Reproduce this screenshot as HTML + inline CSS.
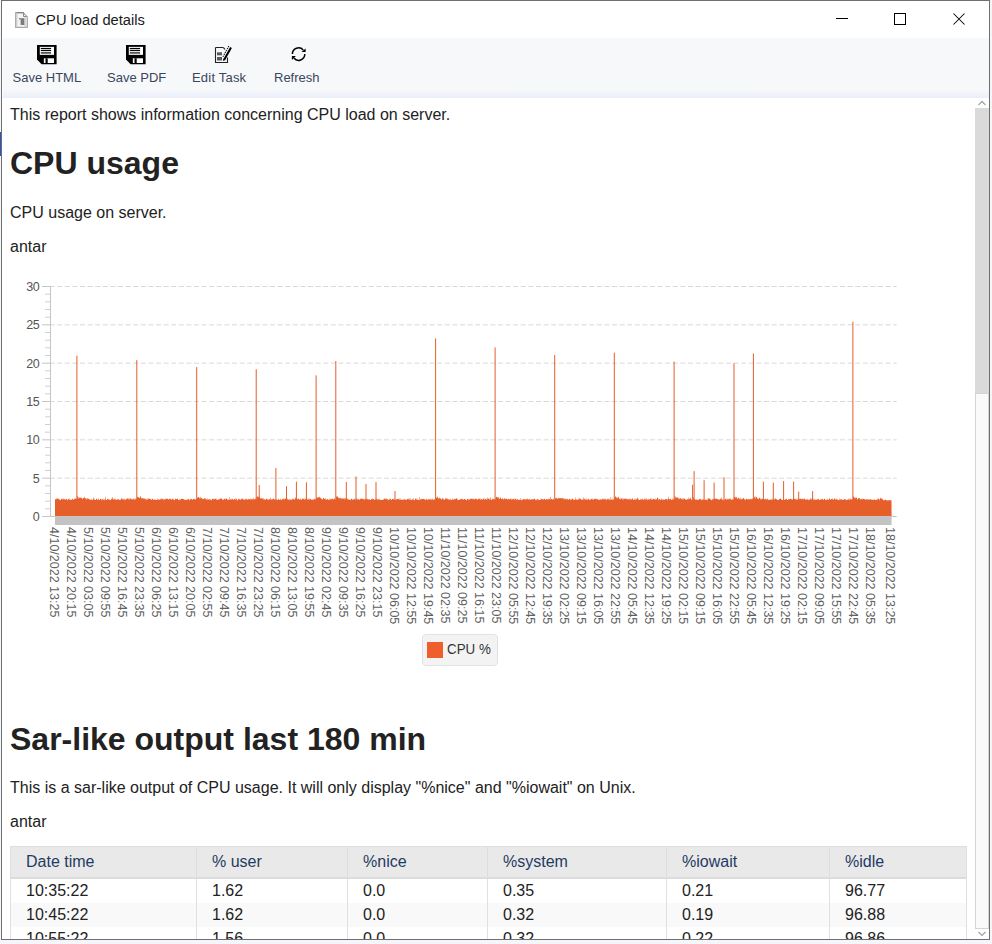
<!DOCTYPE html>
<html><head><meta charset="utf-8">
<style>
html,body{margin:0;padding:0;}
body{width:992px;height:944px;overflow:hidden;position:relative;background:#f4f6fa;font-family:"Liberation Sans",sans-serif;}
.win{position:absolute;left:1px;top:0;width:989px;height:940px;box-sizing:border-box;border:1px solid #6f6f6f;background:#fff;overflow:hidden;}
.abs{position:absolute;white-space:nowrap;}
.title{left:33.5px;top:10px;font-size:14.7px;line-height:18px;color:#1a1a1a;}
.tb{position:absolute;left:1px;top:37px;width:986px;height:60px;background:linear-gradient(to bottom,#f7f8fa 0px,#f7f8fa 52px,#e9eefa 60px);}
.tbl{position:absolute;top:32px;font-size:13px;line-height:16px;color:#3a4660;white-space:nowrap;}
.content{position:absolute;left:0px;top:97px;width:973px;height:841px;overflow:hidden;background:#fff;}
.sb{position:absolute;left:973px;top:97px;width:14px;height:841px;background:#fff;}
.p{position:absolute;left:8px;font-size:16px;line-height:18px;color:#222;white-space:nowrap;}
.h1{position:absolute;left:8px;font-size:32px;line-height:37px;font-weight:bold;color:#222;white-space:nowrap;}
.xl{position:absolute;top:527px;transform-origin:0 0;transform:rotate(90deg);font-size:12.5px;line-height:14px;color:#606060;white-space:nowrap;}
.legend{position:absolute;left:420px;top:536px;width:76px;height:32px;box-sizing:border-box;border:1px solid #e2e2e2;border-radius:4px;background:#f3f3f3;}
.sw{position:absolute;left:4px;top:7px;width:16px;height:16px;background:#ef5f2d;}
.lt{position:absolute;left:24px;top:5px;font-size:15px;line-height:17px;color:#333;white-space:nowrap;transform-origin:0 0;transform:scaleX(0.89);}
table{position:absolute;left:8px;top:748px;width:957px;border-collapse:collapse;font-size:16px;}
th{background:#e9e9e9;color:#1f3b63;font-weight:normal;text-align:left;height:30px;padding:0 0 0 15px;border:1px solid #dedede;border-bottom:2px solid #dcdcdc;}
td{height:24px;padding:0 0 0 15px;color:#222;border-left:1px solid #e0e0e0;border-right:1px solid #e0e0e0;}
tr.alt td{background:#f9f9f9;}
</style></head><body>
<div style="position:absolute;left:0;top:132px;width:1px;height:24px;background:#3050c8"></div>
<div class="win">
  <!-- title bar -->
  <svg class="abs" style="left:12px;top:10px" width="16" height="18" viewBox="0 0 16 18">
    <path d="M1.6,1.6 H9 L13.4,5.8 V16.4 H1.6 Z" fill="#f4f4f4" stroke="#a9a9a9" stroke-width="1.1" stroke-linejoin="round"/>
    <path d="M2.5,1.6 H9 L10.2,3" fill="none" stroke="#858585" stroke-width="1.2"/>
    <path d="M9.5,2.2 L9.5,5.5 L13,5.5" fill="none" stroke="#8a8a8a" stroke-width="1"/>
    <rect x="10" y="6.6" width="2.8" height="9.2" fill="#d6d6d6"/>
    <rect x="6.6" y="7.2" width="3.6" height="6.8" fill="#7b7b7b"/>
    <rect x="5.2" y="7.2" width="1.4" height="1.2" fill="#555"/>
    <rect x="2.2" y="2.4" width="1.2" height="13.4" fill="#c9c9c9"/>
  </svg>
  <div class="abs title">CPU load details</div>
  <svg class="abs" style="left:819px;top:7px" width="160" height="20" viewBox="0 0 160 20">
    <rect x="15" y="10" width="12" height="1" fill="#000"/>
    <rect x="73.5" y="5.5" width="11" height="11" fill="none" stroke="#000" stroke-width="1"/>
    <path d="M132.5,5.5 L143.5,16.5 M143.5,5.5 L132.5,16.5" stroke="#000" stroke-width="1.05"/>
  </svg>
  <!-- toolbar -->
  <div class="tb">
    <svg class="abs" style="left:34px;top:7px" width="22" height="22" viewBox="0 0 22 22">
      <path d="M0,0 H19.6 V19.2 H4.6 L0,14.5 Z" fill="#000"/>
      <rect x="2.8" y="1.85" width="14.2" height="8" fill="#fff"/>
      <rect x="3.8" y="2.9" width="10.3" height="1.2" fill="#000"/>
      <rect x="3.8" y="4.9" width="10.3" height="1.2" fill="#000"/>
      <rect x="3.8" y="7.1" width="10.3" height="1.6" fill="#444"/>
      <rect x="6.85" y="13.3" width="10.15" height="4.7" fill="#fff"/>
      <rect x="8.5" y="13.3" width="2.2" height="5" fill="#000"/>
    </svg>
    <svg class="abs" style="left:123px;top:7px" width="22" height="22" viewBox="0 0 22 22">
      <path d="M0,0 H19.6 V19.2 H4.6 L0,14.5 Z" fill="#000"/>
      <rect x="2.8" y="1.85" width="14.2" height="8" fill="#fff"/>
      <rect x="3.8" y="2.9" width="10.3" height="1.2" fill="#000"/>
      <rect x="3.8" y="4.9" width="10.3" height="1.2" fill="#000"/>
      <rect x="3.8" y="7.1" width="10.3" height="1.6" fill="#444"/>
      <rect x="6.85" y="13.3" width="10.15" height="4.7" fill="#fff"/>
      <rect x="8.5" y="13.3" width="2.2" height="5" fill="#000"/>
    </svg>
    <svg class="abs" style="left:209px;top:6px" width="24" height="22" viewBox="0 0 24 22">
      <path d="M3.5,3.5 H10.5 Q12,3.5 13,5.5 M15.5,13.5 V18.5 H3.5 V3.5" fill="none" stroke="#222" stroke-width="1.1"/>
      <rect x="5" y="8.3" width="5" height="3" fill="#5a5a5a"/>
      <rect x="5" y="13" width="5" height="3.5" fill="#5a5a5a"/>
      <path d="M13.1,16.3 L19.9,4.1 L18.1,3.0 L11.3,15.2 Z" fill="#000"/>
      <path d="M10.9,12.8 L16.9,2.0" fill="none" stroke="#111" stroke-width="1.1" stroke-dasharray="1.3,0.9"/>
      <path d="M11.0,17.0 L11.3,14.6 L13.3,15.9 Z" fill="#000"/>
    </svg>
    <svg class="abs" style="left:286px;top:7px" width="20" height="20" viewBox="0 0 20 20">
      <path d="M3.4,9.1 A6.2,6.2 0 0 1 14.2,4.95" fill="none" stroke="#000" stroke-width="1.5"/>
      <path d="M16.6,3.6 L16.6,7 L12.5,7 Z" fill="#000"/>
      <path d="M15.8,9.1 A6.2,6.2 0 0 1 4.85,13.1" fill="none" stroke="#000" stroke-width="1.5"/>
      <path d="M2.9,11.0 L2.9,14.9 L6.9,11.0 Z" fill="#000"/>
    </svg>
    <div class="tbl" style="left:9.5px">Save HTML</div>
    <div class="tbl" style="left:104px">Save PDF</div>
    <div class="tbl" style="left:189px;letter-spacing:0.2px">Edit Task</div>
    <div class="tbl" style="left:271px">Refresh</div>
  </div>
  <!-- content -->
  <div class="content">
    <div class="p" style="top:8px">This report shows information concerning CPU load on server.</div>
    <div class="h1" style="top:46.5px">CPU usage</div>
    <div class="p" style="top:106px">CPU usage on server.</div>
    <div class="p" style="top:140px">antar</div>
    <div class="abs" style="left:-2px;top:-98px;width:992px;height:700px;">
<svg width="992" height="700" viewBox="0 0 992 700" style="position:absolute;left:0;top:0">
<line x1="49.6" y1="286.50" x2="896.7" y2="286.50" stroke="#d9d9d9" stroke-width="1" stroke-dasharray="5,2.6"/>
<line x1="49.6" y1="324.83" x2="896.7" y2="324.83" stroke="#d9d9d9" stroke-width="1" stroke-dasharray="5,2.6"/>
<line x1="49.6" y1="363.17" x2="896.7" y2="363.17" stroke="#d9d9d9" stroke-width="1" stroke-dasharray="5,2.6"/>
<line x1="49.6" y1="401.50" x2="896.7" y2="401.50" stroke="#d9d9d9" stroke-width="1" stroke-dasharray="5,2.6"/>
<line x1="49.6" y1="439.83" x2="896.7" y2="439.83" stroke="#d9d9d9" stroke-width="1" stroke-dasharray="5,2.6"/>
<line x1="49.6" y1="478.17" x2="896.7" y2="478.17" stroke="#d9d9d9" stroke-width="1" stroke-dasharray="5,2.6"/>
<line x1="50.5" y1="286" x2="50.5" y2="517" stroke="#c6c6c6" stroke-width="1"/>
<line x1="42" y1="516.50" x2="50" y2="516.50" stroke="#c6c6c6" stroke-width="1"/>
<line x1="45" y1="508.83" x2="50" y2="508.83" stroke="#cfcfcf" stroke-width="1"/>
<line x1="45" y1="501.17" x2="50" y2="501.17" stroke="#cfcfcf" stroke-width="1"/>
<line x1="45" y1="493.50" x2="50" y2="493.50" stroke="#cfcfcf" stroke-width="1"/>
<line x1="45" y1="485.83" x2="50" y2="485.83" stroke="#cfcfcf" stroke-width="1"/>
<line x1="42" y1="478.17" x2="50" y2="478.17" stroke="#c6c6c6" stroke-width="1"/>
<line x1="45" y1="470.50" x2="50" y2="470.50" stroke="#cfcfcf" stroke-width="1"/>
<line x1="45" y1="462.83" x2="50" y2="462.83" stroke="#cfcfcf" stroke-width="1"/>
<line x1="45" y1="455.17" x2="50" y2="455.17" stroke="#cfcfcf" stroke-width="1"/>
<line x1="45" y1="447.50" x2="50" y2="447.50" stroke="#cfcfcf" stroke-width="1"/>
<line x1="42" y1="439.83" x2="50" y2="439.83" stroke="#c6c6c6" stroke-width="1"/>
<line x1="45" y1="432.17" x2="50" y2="432.17" stroke="#cfcfcf" stroke-width="1"/>
<line x1="45" y1="424.50" x2="50" y2="424.50" stroke="#cfcfcf" stroke-width="1"/>
<line x1="45" y1="416.83" x2="50" y2="416.83" stroke="#cfcfcf" stroke-width="1"/>
<line x1="45" y1="409.17" x2="50" y2="409.17" stroke="#cfcfcf" stroke-width="1"/>
<line x1="42" y1="401.50" x2="50" y2="401.50" stroke="#c6c6c6" stroke-width="1"/>
<line x1="45" y1="393.83" x2="50" y2="393.83" stroke="#cfcfcf" stroke-width="1"/>
<line x1="45" y1="386.17" x2="50" y2="386.17" stroke="#cfcfcf" stroke-width="1"/>
<line x1="45" y1="378.50" x2="50" y2="378.50" stroke="#cfcfcf" stroke-width="1"/>
<line x1="45" y1="370.83" x2="50" y2="370.83" stroke="#cfcfcf" stroke-width="1"/>
<line x1="42" y1="363.17" x2="50" y2="363.17" stroke="#c6c6c6" stroke-width="1"/>
<line x1="45" y1="355.50" x2="50" y2="355.50" stroke="#cfcfcf" stroke-width="1"/>
<line x1="45" y1="347.83" x2="50" y2="347.83" stroke="#cfcfcf" stroke-width="1"/>
<line x1="45" y1="340.17" x2="50" y2="340.17" stroke="#cfcfcf" stroke-width="1"/>
<line x1="45" y1="332.50" x2="50" y2="332.50" stroke="#cfcfcf" stroke-width="1"/>
<line x1="42" y1="324.83" x2="50" y2="324.83" stroke="#c6c6c6" stroke-width="1"/>
<line x1="45" y1="317.17" x2="50" y2="317.17" stroke="#cfcfcf" stroke-width="1"/>
<line x1="45" y1="309.50" x2="50" y2="309.50" stroke="#cfcfcf" stroke-width="1"/>
<line x1="45" y1="301.83" x2="50" y2="301.83" stroke="#cfcfcf" stroke-width="1"/>
<line x1="45" y1="294.17" x2="50" y2="294.17" stroke="#cfcfcf" stroke-width="1"/>
<line x1="42" y1="286.50" x2="50" y2="286.50" stroke="#c6c6c6" stroke-width="1"/>
<path d="M55.0,516.0L55.0,498.98L55.5,498.98L55.5,499.57L56.0,499.57L56.0,499.36L56.5,499.36L56.5,498.50L57.0,498.50L57.0,498.47L57.5,498.47L57.5,498.53L58.0,498.53L58.0,499.16L58.5,499.16L58.5,498.62L59.0,498.62L59.0,499.53L59.5,499.53L59.5,499.44L60.0,499.44L60.0,500.16L60.5,500.16L60.5,499.95L61.0,499.95L61.0,498.66L61.5,498.66L61.5,498.96L62.0,498.96L62.0,498.73L62.5,498.73L62.5,499.55L63.0,499.55L63.0,499.39L63.5,499.39L63.5,498.51L64.0,498.51L64.0,499.62L64.5,499.62L64.5,498.97L65.0,498.97L65.0,499.22L65.5,499.22L65.5,499.83L66.0,499.83L66.0,498.84L66.5,498.84L66.5,499.35L67.0,499.35L67.0,499.71L67.5,499.71L67.5,500.16L68.0,500.16L68.0,499.15L68.5,499.15L68.5,498.67L69.0,498.67L69.0,498.47L69.5,498.47L69.5,499.78L70.0,499.78L70.0,499.98L70.5,499.98L70.5,499.65L71.0,499.65L71.0,499.44L71.5,499.44L71.5,499.91L72.0,499.91L72.0,499.25L72.5,499.25L72.5,498.51L73.0,498.51L73.0,499.56L73.5,499.56L73.5,499.88L74.0,499.88L74.0,499.09L74.5,499.09L74.5,498.44L75.0,498.44L75.0,498.70L75.5,498.70L75.5,498.51L76.0,498.51L76.0,498.63L76.5,498.63L76.5,499.10L77.0,499.10L77.0,495.95L77.5,495.95L77.5,497.14L78.0,497.14L78.0,497.11L78.5,497.11L78.5,498.67L79.0,498.67L79.0,497.43L79.5,497.43L79.5,498.09L80.0,498.09L80.0,497.25L80.5,497.25L80.5,498.10L81.0,498.10L81.0,498.16L81.5,498.16L81.5,497.38L82.0,497.38L82.0,499.22L82.5,499.22L82.5,498.31L83.0,498.31L83.0,498.00L83.5,498.00L83.5,498.30L84.0,498.30L84.0,498.03L84.5,498.03L84.5,496.73L85.0,496.73L85.0,498.29L85.5,498.29L85.5,498.58L86.0,498.58L86.0,499.85L86.5,499.85L86.5,498.29L87.0,498.29L87.0,498.67L87.5,498.67L87.5,498.19L88.0,498.19L88.0,498.52L88.5,498.52L88.5,499.10L89.0,499.10L89.0,499.65L89.5,499.65L89.5,499.06L90.0,499.06L90.0,499.79L90.5,499.79L90.5,499.80L91.0,499.80L91.0,498.80L91.5,498.80L91.5,500.17L92.0,500.17L92.0,499.85L92.5,499.85L92.5,499.73L93.0,499.73L93.0,499.33L93.5,499.33L93.5,497.53L94.0,497.53L94.0,498.87L94.5,498.87L94.5,500.12L95.0,500.12L95.0,500.09L95.5,500.09L95.5,500.12L96.0,500.12L96.0,498.80L96.5,498.80L96.5,498.75L97.0,498.75L97.0,499.52L97.5,499.52L97.5,499.91L98.0,499.91L98.0,499.58L98.5,499.58L98.5,498.55L99.0,498.55L99.0,500.04L99.5,500.04L99.5,499.75L100.0,499.75L100.0,498.72L100.5,498.72L100.5,499.00L101.0,499.00L101.0,500.15L101.5,500.15L101.5,499.12L102.0,499.12L102.0,499.70L102.5,499.70L102.5,498.63L103.0,498.63L103.0,500.03L103.5,500.03L103.5,498.66L104.0,498.66L104.0,500.16L104.5,500.16L104.5,499.03L105.0,499.03L105.0,496.68L105.5,496.68L105.5,499.57L106.0,499.57L106.0,500.08L106.5,500.08L106.5,499.97L107.0,499.97L107.0,498.78L107.5,498.78L107.5,498.93L108.0,498.93L108.0,499.46L108.5,499.46L108.5,499.15L109.0,499.15L109.0,500.04L109.5,500.04L109.5,499.22L110.0,499.22L110.0,500.03L110.5,500.03L110.5,500.05L111.0,500.05L111.0,499.36L111.5,499.36L111.5,498.43L112.0,498.43L112.0,497.03L112.5,497.03L112.5,498.71L113.0,498.71L113.0,499.71L113.5,499.71L113.5,498.99L114.0,498.99L114.0,499.40L114.5,499.40L114.5,498.59L115.0,498.59L115.0,498.85L115.5,498.85L115.5,499.79L116.0,499.79L116.0,499.41L116.5,499.41L116.5,500.04L117.0,500.04L117.0,499.50L117.5,499.50L117.5,499.32L118.0,499.32L118.0,499.21L118.5,499.21L118.5,499.26L119.0,499.26L119.0,499.66L119.5,499.66L119.5,500.10L120.0,500.10L120.0,499.41L120.5,499.41L120.5,499.91L121.0,499.91L121.0,498.62L121.5,498.62L121.5,498.53L122.0,498.53L122.0,498.53L122.5,498.53L122.5,499.81L123.0,499.81L123.0,498.68L123.5,498.68L123.5,499.59L124.0,499.59L124.0,499.99L124.5,499.99L124.5,498.80L125.0,498.80L125.0,499.12L125.5,499.12L125.5,500.18L126.0,500.18L126.0,498.69L126.5,498.69L126.5,499.33L127.0,499.33L127.0,498.75L127.5,498.75L127.5,498.37L128.0,498.37L128.0,498.20L128.5,498.20L128.5,499.52L129.0,499.52L129.0,498.52L129.5,498.52L129.5,499.82L130.0,499.82L130.0,498.59L130.5,498.59L130.5,498.47L131.0,498.47L131.0,498.89L131.5,498.89L131.5,499.16L132.0,499.16L132.0,499.87L132.5,499.87L132.5,498.67L133.0,498.67L133.0,499.43L133.5,499.43L133.5,498.56L134.0,498.56L134.0,499.64L134.5,499.64L134.5,498.53L135.0,498.53L135.0,499.54L135.5,499.54L135.5,498.55L136.0,498.55L136.0,498.52L136.5,498.52L136.5,499.22L137.0,499.22L137.0,497.37L137.5,497.37L137.5,496.87L138.0,496.87L138.0,497.30L138.5,497.30L138.5,497.27L139.0,497.27L139.0,498.20L139.5,498.20L139.5,497.82L140.0,497.82L140.0,495.95L140.5,495.95L140.5,497.25L141.0,497.25L141.0,497.64L141.5,497.64L141.5,498.46L142.0,498.46L142.0,498.21L142.5,498.21L142.5,498.18L143.0,498.18L143.0,498.97L143.5,498.97L143.5,498.11L144.0,498.11L144.0,499.35L144.5,499.35L144.5,497.96L145.0,497.96L145.0,499.27L145.5,499.27L145.5,498.65L146.0,498.65L146.0,498.76L146.5,498.76L146.5,499.91L147.0,499.91L147.0,499.90L147.5,499.90L147.5,498.17L148.0,498.17L148.0,499.09L148.5,499.09L148.5,498.28L149.0,498.28L149.0,499.12L149.5,499.12L149.5,498.44L150.0,498.44L150.0,498.82L150.5,498.82L150.5,499.35L151.0,499.35L151.0,499.58L151.5,499.58L151.5,499.98L152.0,499.98L152.0,498.99L152.5,498.99L152.5,498.67L153.0,498.67L153.0,499.56L153.5,499.56L153.5,499.90L154.0,499.90L154.0,499.53L154.5,499.53L154.5,499.86L155.0,499.86L155.0,499.34L155.5,499.34L155.5,499.90L156.0,499.90L156.0,499.89L156.5,499.89L156.5,500.01L157.0,500.01L157.0,499.65L157.5,499.65L157.5,498.46L158.0,498.46L158.0,499.05L158.5,499.05L158.5,499.90L159.0,499.90L159.0,499.53L159.5,499.53L159.5,499.63L160.0,499.63L160.0,498.41L160.5,498.41L160.5,499.75L161.0,499.75L161.0,499.36L161.5,499.36L161.5,498.52L162.0,498.52L162.0,498.85L162.5,498.85L162.5,498.88L163.0,498.88L163.0,498.77L163.5,498.77L163.5,500.16L164.0,500.16L164.0,499.09L164.5,499.09L164.5,499.63L165.0,499.63L165.0,499.51L165.5,499.51L165.5,498.54L166.0,498.54L166.0,498.86L166.5,498.86L166.5,498.95L167.0,498.95L167.0,498.42L167.5,498.42L167.5,498.88L168.0,498.88L168.0,499.65L168.5,499.65L168.5,498.92L169.0,498.92L169.0,499.24L169.5,499.24L169.5,498.61L170.0,498.61L170.0,498.76L170.5,498.76L170.5,498.90L171.0,498.90L171.0,499.88L171.5,499.88L171.5,499.21L172.0,499.21L172.0,498.78L172.5,498.78L172.5,498.78L173.0,498.78L173.0,498.66L173.5,498.66L173.5,500.11L174.0,500.11L174.0,499.88L174.5,499.88L174.5,500.00L175.0,500.00L175.0,498.82L175.5,498.82L175.5,498.77L176.0,498.77L176.0,499.29L176.5,499.29L176.5,498.94L177.0,498.94L177.0,499.02L177.5,499.02L177.5,498.29L178.0,498.29L178.0,499.91L178.5,499.91L178.5,500.07L179.0,500.07L179.0,500.02L179.5,500.02L179.5,499.07L180.0,499.07L180.0,500.20L180.5,500.20L180.5,499.05L181.0,499.05L181.0,498.90L181.5,498.90L181.5,498.58L182.0,498.58L182.0,498.91L182.5,498.91L182.5,498.85L183.0,498.85L183.0,499.32L183.5,499.32L183.5,499.07L184.0,499.07L184.0,499.99L184.5,499.99L184.5,499.54L185.0,499.54L185.0,500.09L185.5,500.09L185.5,499.70L186.0,499.70L186.0,499.72L186.5,499.72L186.5,499.75L187.0,499.75L187.0,498.92L187.5,498.92L187.5,500.07L188.0,500.07L188.0,499.25L188.5,499.25L188.5,498.94L189.0,498.94L189.0,500.16L189.5,500.16L189.5,499.58L190.0,499.58L190.0,499.40L190.5,499.40L190.5,498.70L191.0,498.70L191.0,498.77L191.5,498.77L191.5,499.29L192.0,499.29L192.0,500.03L192.5,500.03L192.5,499.21L193.0,499.21L193.0,498.75L193.5,498.75L193.5,499.02L194.0,499.02L194.0,498.83L194.5,498.83L194.5,499.43L195.0,499.43L195.0,499.75L195.5,499.75L195.5,499.14L196.0,499.14L196.0,499.08L196.5,499.08L196.5,498.51L197.0,498.51L197.0,497.74L197.5,497.74L197.5,497.85L198.0,497.85L198.0,497.11L198.5,497.11L198.5,497.04L199.0,497.04L199.0,497.65L199.5,497.65L199.5,498.55L200.0,498.55L200.0,496.78L200.5,496.78L200.5,498.40L201.0,498.40L201.0,498.12L201.5,498.12L201.5,498.17L202.0,498.17L202.0,498.75L202.5,498.75L202.5,498.76L203.0,498.76L203.0,498.98L203.5,498.98L203.5,499.15L204.0,499.15L204.0,498.27L204.5,498.27L204.5,498.14L205.0,498.14L205.0,499.13L205.5,499.13L205.5,498.18L206.0,498.18L206.0,499.71L206.5,499.71L206.5,499.02L207.0,499.02L207.0,499.91L207.5,499.91L207.5,498.18L208.0,498.18L208.0,498.92L208.5,498.92L208.5,499.94L209.0,499.94L209.0,499.01L209.5,499.01L209.5,499.63L210.0,499.63L210.0,499.83L210.5,499.83L210.5,499.31L211.0,499.31L211.0,500.15L211.5,500.15L211.5,499.88L212.0,499.88L212.0,498.80L212.5,498.80L212.5,498.93L213.0,498.93L213.0,499.29L213.5,499.29L213.5,498.80L214.0,498.80L214.0,499.60L214.5,499.60L214.5,498.66L215.0,498.66L215.0,498.78L215.5,498.78L215.5,498.66L216.0,498.66L216.0,498.51L216.5,498.51L216.5,500.02L217.0,500.02L217.0,499.72L217.5,499.72L217.5,500.08L218.0,500.08L218.0,498.73L218.5,498.73L218.5,499.74L219.0,499.74L219.0,499.60L219.5,499.60L219.5,499.07L220.0,499.07L220.0,497.78L220.5,497.78L220.5,499.03L221.0,499.03L221.0,498.62L221.5,498.62L221.5,498.77L222.0,498.77L222.0,499.88L222.5,499.88L222.5,499.18L223.0,499.18L223.0,499.25L223.5,499.25L223.5,500.06L224.0,500.06L224.0,499.06L224.5,499.06L224.5,498.45L225.0,498.45L225.0,499.86L225.5,499.86L225.5,498.47L226.0,498.47L226.0,498.51L226.5,498.51L226.5,498.86L227.0,498.86L227.0,500.02L227.5,500.02L227.5,498.89L228.0,498.89L228.0,499.51L228.5,499.51L228.5,499.69L229.0,499.69L229.0,497.26L229.5,497.26L229.5,500.05L230.0,500.05L230.0,499.25L230.5,499.25L230.5,499.26L231.0,499.26L231.0,500.12L231.5,500.12L231.5,498.85L232.0,498.85L232.0,499.29L232.5,499.29L232.5,498.73L233.0,498.73L233.0,499.73L233.5,499.73L233.5,499.79L234.0,499.79L234.0,498.99L234.5,498.99L234.5,499.05L235.0,499.05L235.0,498.54L235.5,498.54L235.5,499.76L236.0,499.76L236.0,498.52L236.5,498.52L236.5,499.39L237.0,499.39L237.0,500.16L237.5,500.16L237.5,500.18L238.0,500.18L238.0,498.55L238.5,498.55L238.5,499.30L239.0,499.30L239.0,499.20L239.5,499.20L239.5,499.15L240.0,499.15L240.0,499.61L240.5,499.61L240.5,499.92L241.0,499.92L241.0,498.62L241.5,498.62L241.5,498.93L242.0,498.93L242.0,499.07L242.5,499.07L242.5,498.76L243.0,498.76L243.0,498.84L243.5,498.84L243.5,499.99L244.0,499.99L244.0,498.99L244.5,498.99L244.5,500.19L245.0,500.19L245.0,498.82L245.5,498.82L245.5,499.58L246.0,499.58L246.0,498.58L246.5,498.58L246.5,499.87L247.0,499.87L247.0,500.05L247.5,500.05L247.5,498.93L248.0,498.93L248.0,498.74L248.5,498.74L248.5,499.45L249.0,499.45L249.0,499.07L249.5,499.07L249.5,499.21L250.0,499.21L250.0,499.80L250.5,499.80L250.5,498.59L251.0,498.59L251.0,499.52L251.5,499.52L251.5,499.06L252.0,499.06L252.0,498.77L252.5,498.77L252.5,499.48L253.0,499.48L253.0,497.78L253.5,497.78L253.5,499.62L254.0,499.62L254.0,498.96L254.5,498.96L254.5,499.83L255.0,499.83L255.0,498.51L255.5,498.51L255.5,499.11L256.0,499.11L256.0,499.55L256.5,499.55L256.5,496.46L257.0,496.46L257.0,496.04L257.5,496.04L257.5,497.25L258.0,497.25L258.0,496.79L258.5,496.79L258.5,497.26L259.0,497.26L259.0,495.62L259.5,495.62L259.5,498.29L260.0,498.29L260.0,498.53L260.5,498.53L260.5,498.11L261.0,498.11L261.0,497.76L261.5,497.76L261.5,498.65L262.0,498.65L262.0,498.84L262.5,498.84L262.5,498.43L263.0,498.43L263.0,498.00L263.5,498.00L263.5,499.82L264.0,499.82L264.0,499.48L264.5,499.48L264.5,499.21L265.0,499.21L265.0,499.48L265.5,499.48L265.5,499.68L266.0,499.68L266.0,498.50L266.5,498.50L266.5,498.88L267.0,498.88L267.0,499.55L267.5,499.55L267.5,499.28L268.0,499.28L268.0,499.71L268.5,499.71L268.5,499.39L269.0,499.39L269.0,498.95L269.5,498.95L269.5,499.45L270.0,499.45L270.0,499.59L270.5,499.59L270.5,497.76L271.0,497.76L271.0,499.28L271.5,499.28L271.5,499.77L272.0,499.77L272.0,499.22L272.5,499.22L272.5,499.25L273.0,499.25L273.0,498.63L273.5,498.63L273.5,498.57L274.0,498.57L274.0,499.32L274.5,499.32L274.5,499.55L275.0,499.55L275.0,499.72L275.5,499.72L275.5,499.32L276.0,499.32L276.0,499.31L276.5,499.31L276.5,500.11L277.0,500.11L277.0,499.94L277.5,499.94L277.5,499.72L278.0,499.72L278.0,498.75L278.5,498.75L278.5,499.29L279.0,499.29L279.0,500.05L279.5,500.05L279.5,499.82L280.0,499.82L280.0,498.52L280.5,498.52L280.5,499.76L281.0,499.76L281.0,500.01L281.5,500.01L281.5,499.87L282.0,499.87L282.0,499.30L282.5,499.30L282.5,498.77L283.0,498.77L283.0,499.31L283.5,499.31L283.5,498.47L284.0,498.47L284.0,498.69L284.5,498.69L284.5,499.62L285.0,499.62L285.0,498.70L285.5,498.70L285.5,498.61L286.0,498.61L286.0,499.55L286.5,499.55L286.5,499.97L287.0,499.97L287.0,499.44L287.5,499.44L287.5,498.59L288.0,498.59L288.0,499.53L288.5,499.53L288.5,499.84L289.0,499.84L289.0,500.18L289.5,500.18L289.5,499.05L290.0,499.05L290.0,499.20L290.5,499.20L290.5,499.74L291.0,499.74L291.0,499.88L291.5,499.88L291.5,499.55L292.0,499.55L292.0,499.45L292.5,499.45L292.5,498.41L293.0,498.41L293.0,498.67L293.5,498.67L293.5,499.18L294.0,499.18L294.0,500.01L294.5,500.01L294.5,498.81L295.0,498.81L295.0,497.41L295.5,497.41L295.5,498.59L296.0,498.59L296.0,498.80L296.5,498.80L296.5,499.46L297.0,499.46L297.0,499.52L297.5,499.52L297.5,498.64L298.0,498.64L298.0,498.84L298.5,498.84L298.5,498.57L299.0,498.57L299.0,499.97L299.5,499.97L299.5,499.12L300.0,499.12L300.0,498.42L300.5,498.42L300.5,499.41L301.0,499.41L301.0,499.56L301.5,499.56L301.5,500.09L302.0,500.09L302.0,498.85L302.5,498.85L302.5,498.48L303.0,498.48L303.0,499.13L303.5,499.13L303.5,498.51L304.0,498.51L304.0,498.42L304.5,498.42L304.5,500.09L305.0,500.09L305.0,498.76L305.5,498.76L305.5,499.31L306.0,499.31L306.0,499.86L306.5,499.86L306.5,498.96L307.0,498.96L307.0,498.49L307.5,498.49L307.5,499.81L308.0,499.81L308.0,498.41L308.5,498.41L308.5,499.74L309.0,499.74L309.0,499.74L309.5,499.74L309.5,498.81L310.0,498.81L310.0,498.82L310.5,498.82L310.5,499.00L311.0,499.00L311.0,499.65L311.5,499.65L311.5,499.68L312.0,499.68L312.0,499.40L312.5,499.40L312.5,499.82L313.0,499.82L313.0,498.88L313.5,498.88L313.5,500.14L314.0,500.14L314.0,499.09L314.5,499.09L314.5,498.82L315.0,498.82L315.0,500.10L315.5,500.10L315.5,498.99L316.0,498.99L316.0,498.99L316.5,498.99L316.5,497.35L317.0,497.35L317.0,497.55L317.5,497.55L317.5,497.53L318.0,497.53L318.0,497.42L318.5,497.42L318.5,497.31L319.0,497.31L319.0,497.55L319.5,497.55L319.5,496.86L320.0,496.86L320.0,498.33L320.5,498.33L320.5,497.42L321.0,497.42L321.0,499.07L321.5,499.07L321.5,498.51L322.0,498.51L322.0,499.41L322.5,499.41L322.5,499.14L323.0,499.14L323.0,498.20L323.5,498.20L323.5,497.85L324.0,497.85L324.0,499.06L324.5,499.06L324.5,498.64L325.0,498.64L325.0,499.46L325.5,499.46L325.5,498.01L326.0,498.01L326.0,499.44L326.5,499.44L326.5,499.81L327.0,499.81L327.0,499.30L327.5,499.30L327.5,499.01L328.0,499.01L328.0,499.53L328.5,499.53L328.5,499.95L329.0,499.95L329.0,499.88L329.5,499.88L329.5,498.40L330.0,498.40L330.0,499.77L330.5,499.77L330.5,498.41L331.0,498.41L331.0,499.28L331.5,499.28L331.5,498.73L332.0,498.73L332.0,499.02L332.5,499.02L332.5,498.87L333.0,498.87L333.0,498.91L333.5,498.91L333.5,499.66L334.0,499.66L334.0,498.60L334.5,498.60L334.5,498.55L335.0,498.55L335.0,499.65L335.5,499.65L335.5,499.53L336.0,499.53L336.0,495.96L336.5,495.96L336.5,497.14L337.0,497.14L337.0,496.22L337.5,496.22L337.5,497.04L338.0,497.04L338.0,497.21L338.5,497.21L338.5,498.20L339.0,498.20L339.0,498.10L339.5,498.10L339.5,498.59L340.0,498.59L340.0,497.49L340.5,497.49L340.5,498.57L341.0,498.57L341.0,499.37L341.5,499.37L341.5,498.04L342.0,498.04L342.0,498.15L342.5,498.15L342.5,498.56L343.0,498.56L343.0,498.29L343.5,498.29L343.5,499.09L344.0,499.09L344.0,498.02L344.5,498.02L344.5,499.48L345.0,499.48L345.0,498.52L345.5,498.52L345.5,498.58L346.0,498.58L346.0,498.81L346.5,498.81L346.5,499.07L347.0,499.07L347.0,498.46L347.5,498.46L347.5,499.55L348.0,499.55L348.0,499.43L348.5,499.43L348.5,499.16L349.0,499.16L349.0,499.70L349.5,499.70L349.5,499.79L350.0,499.79L350.0,499.93L350.5,499.93L350.5,499.55L351.0,499.55L351.0,498.96L351.5,498.96L351.5,498.58L352.0,498.58L352.0,499.81L352.5,499.81L352.5,499.53L353.0,499.53L353.0,499.16L353.5,499.16L353.5,499.52L354.0,499.52L354.0,499.62L354.5,499.62L354.5,498.73L355.0,498.73L355.0,499.80L355.5,499.80L355.5,499.28L356.0,499.28L356.0,498.47L356.5,498.47L356.5,498.69L357.0,498.69L357.0,500.09L357.5,500.09L357.5,498.58L358.0,498.58L358.0,499.37L358.5,499.37L358.5,499.32L359.0,499.32L359.0,499.89L359.5,499.89L359.5,499.14L360.0,499.14L360.0,498.78L360.5,498.78L360.5,499.11L361.0,499.11L361.0,498.62L361.5,498.62L361.5,499.04L362.0,499.04L362.0,498.89L362.5,498.89L362.5,498.42L363.0,498.42L363.0,499.16L363.5,499.16L363.5,499.03L364.0,499.03L364.0,498.80L364.5,498.80L364.5,500.09L365.0,500.09L365.0,498.79L365.5,498.79L365.5,499.11L366.0,499.11L366.0,498.63L366.5,498.63L366.5,499.86L367.0,499.86L367.0,499.24L367.5,499.24L367.5,498.81L368.0,498.81L368.0,499.04L368.5,499.04L368.5,499.87L369.0,499.87L369.0,499.24L369.5,499.24L369.5,499.39L370.0,499.39L370.0,499.90L370.5,499.90L370.5,499.93L371.0,499.93L371.0,499.08L371.5,499.08L371.5,499.17L372.0,499.17L372.0,498.40L372.5,498.40L372.5,498.91L373.0,498.91L373.0,498.94L373.5,498.94L373.5,499.17L374.0,499.17L374.0,499.59L374.5,499.59L374.5,500.07L375.0,500.07L375.0,498.50L375.5,498.50L375.5,500.03L376.0,500.03L376.0,498.65L376.5,498.65L376.5,499.02L377.0,499.02L377.0,500.11L377.5,500.11L377.5,498.85L378.0,498.85L378.0,498.66L378.5,498.66L378.5,499.80L379.0,499.80L379.0,498.67L379.5,498.67L379.5,499.83L380.0,499.83L380.0,500.00L380.5,500.00L380.5,499.81L381.0,499.81L381.0,500.01L381.5,500.01L381.5,499.91L382.0,499.91L382.0,499.65L382.5,499.65L382.5,499.74L383.0,499.74L383.0,499.99L383.5,499.99L383.5,498.88L384.0,498.88L384.0,498.65L384.5,498.65L384.5,498.51L385.0,498.51L385.0,498.66L385.5,498.66L385.5,499.30L386.0,499.30L386.0,498.19L386.5,498.19L386.5,499.24L387.0,499.24L387.0,499.60L387.5,499.60L387.5,499.07L388.0,499.07L388.0,500.13L388.5,500.13L388.5,499.55L389.0,499.55L389.0,498.45L389.5,498.45L389.5,499.63L390.0,499.63L390.0,498.99L390.5,498.99L390.5,499.32L391.0,499.32L391.0,500.02L391.5,500.02L391.5,499.69L392.0,499.69L392.0,499.01L392.5,499.01L392.5,499.06L393.0,499.06L393.0,499.35L393.5,499.35L393.5,498.78L394.0,498.78L394.0,499.16L394.5,499.16L394.5,499.89L395.0,499.89L395.0,499.89L395.5,499.89L395.5,499.31L396.0,499.31L396.0,499.31L396.5,499.31L396.5,499.58L397.0,499.58L397.0,499.00L397.5,499.00L397.5,498.94L398.0,498.94L398.0,499.54L398.5,499.54L398.5,498.47L399.0,498.47L399.0,499.99L399.5,499.99L399.5,498.49L400.0,498.49L400.0,498.41L400.5,498.41L400.5,500.06L401.0,500.06L401.0,499.58L401.5,499.58L401.5,500.04L402.0,500.04L402.0,499.51L402.5,499.51L402.5,499.65L403.0,499.65L403.0,499.63L403.5,499.63L403.5,499.60L404.0,499.60L404.0,499.77L404.5,499.77L404.5,498.73L405.0,498.73L405.0,499.79L405.5,499.79L405.5,499.58L406.0,499.58L406.0,499.88L406.5,499.88L406.5,499.41L407.0,499.41L407.0,498.94L407.5,498.94L407.5,498.97L408.0,498.97L408.0,499.56L408.5,499.56L408.5,498.50L409.0,498.50L409.0,498.47L409.5,498.47L409.5,499.86L410.0,499.86L410.0,500.05L410.5,500.05L410.5,498.43L411.0,498.43L411.0,499.47L411.5,499.47L411.5,500.17L412.0,500.17L412.0,499.14L412.5,499.14L412.5,499.56L413.0,499.56L413.0,498.17L413.5,498.17L413.5,499.63L414.0,499.63L414.0,500.14L414.5,500.14L414.5,499.97L415.0,499.97L415.0,498.43L415.5,498.43L415.5,498.84L416.0,498.84L416.0,498.74L416.5,498.74L416.5,499.79L417.0,499.79L417.0,499.94L417.5,499.94L417.5,498.55L418.0,498.55L418.0,499.68L418.5,499.68L418.5,500.08L419.0,500.08L419.0,500.14L419.5,500.14L419.5,496.94L420.0,496.94L420.0,499.87L420.5,499.87L420.5,498.96L421.0,498.96L421.0,498.70L421.5,498.70L421.5,499.28L422.0,499.28L422.0,499.06L422.5,499.06L422.5,499.19L423.0,499.19L423.0,498.66L423.5,498.66L423.5,499.05L424.0,499.05L424.0,499.53L424.5,499.53L424.5,499.09L425.0,499.09L425.0,500.10L425.5,500.10L425.5,499.42L426.0,499.42L426.0,498.51L426.5,498.51L426.5,499.67L427.0,499.67L427.0,499.00L427.5,499.00L427.5,500.16L428.0,500.16L428.0,499.48L428.5,499.48L428.5,499.17L429.0,499.17L429.0,499.08L429.5,499.08L429.5,499.48L430.0,499.48L430.0,499.85L430.5,499.85L430.5,498.40L431.0,498.40L431.0,499.16L431.5,499.16L431.5,499.87L432.0,499.87L432.0,498.48L432.5,498.48L432.5,499.86L433.0,499.86L433.0,499.43L433.5,499.43L433.5,499.93L434.0,499.93L434.0,499.63L434.5,499.63L434.5,499.02L435.0,499.02L435.0,499.40L435.5,499.40L435.5,498.76L436.0,498.76L436.0,497.55L436.5,497.55L436.5,497.99L437.0,497.99L437.0,496.57L437.5,496.57L437.5,497.16L438.0,497.16L438.0,498.20L438.5,498.20L438.5,498.65L439.0,498.65L439.0,498.34L439.5,498.34L439.5,497.51L440.0,497.51L440.0,498.16L440.5,498.16L440.5,498.76L441.0,498.76L441.0,499.65L441.5,499.65L441.5,499.03L442.0,499.03L442.0,498.85L442.5,498.85L442.5,497.68L443.0,497.68L443.0,499.44L443.5,499.44L443.5,498.45L444.0,498.45L444.0,499.61L444.5,499.61L444.5,499.90L445.0,499.90L445.0,498.54L445.5,498.54L445.5,498.13L446.0,498.13L446.0,498.89L446.5,498.89L446.5,498.31L447.0,498.31L447.0,498.45L447.5,498.45L447.5,499.17L448.0,499.17L448.0,499.61L448.5,499.61L448.5,499.21L449.0,499.21L449.0,500.14L449.5,500.14L449.5,498.80L450.0,498.80L450.0,498.86L450.5,498.86L450.5,500.02L451.0,500.02L451.0,499.91L451.5,499.91L451.5,499.82L452.0,499.82L452.0,499.56L452.5,499.56L452.5,498.50L453.0,498.50L453.0,499.76L453.5,499.76L453.5,499.62L454.0,499.62L454.0,499.46L454.5,499.46L454.5,498.59L455.0,498.59L455.0,498.86L455.5,498.86L455.5,499.27L456.0,499.27L456.0,498.83L456.5,498.83L456.5,498.04L457.0,498.04L457.0,498.75L457.5,498.75L457.5,500.07L458.0,500.07L458.0,500.08L458.5,500.08L458.5,500.00L459.0,500.00L459.0,499.21L459.5,499.21L459.5,500.07L460.0,500.07L460.0,499.53L460.5,499.53L460.5,499.01L461.0,499.01L461.0,499.26L461.5,499.26L461.5,498.66L462.0,498.66L462.0,498.50L462.5,498.50L462.5,499.40L463.0,499.40L463.0,499.97L463.5,499.97L463.5,499.14L464.0,499.14L464.0,498.89L464.5,498.89L464.5,499.00L465.0,499.00L465.0,499.28L465.5,499.28L465.5,500.03L466.0,500.03L466.0,500.16L466.5,500.16L466.5,500.01L467.0,500.01L467.0,498.78L467.5,498.78L467.5,498.92L468.0,498.92L468.0,498.76L468.5,498.76L468.5,500.18L469.0,500.18L469.0,500.07L469.5,500.07L469.5,498.92L470.0,498.92L470.0,498.50L470.5,498.50L470.5,498.93L471.0,498.93L471.0,498.43L471.5,498.43L471.5,499.01L472.0,499.01L472.0,498.40L472.5,498.40L472.5,499.35L473.0,499.35L473.0,499.18L473.5,499.18L473.5,498.79L474.0,498.79L474.0,498.65L474.5,498.65L474.5,499.79L475.0,499.79L475.0,498.75L475.5,498.75L475.5,498.56L476.0,498.56L476.0,499.29L476.5,499.29L476.5,498.77L477.0,498.77L477.0,499.67L477.5,499.67L477.5,499.45L478.0,499.45L478.0,498.52L478.5,498.52L478.5,499.13L479.0,499.13L479.0,498.50L479.5,498.50L479.5,499.00L480.0,499.00L480.0,499.96L480.5,499.96L480.5,498.43L481.0,498.43L481.0,499.26L481.5,499.26L481.5,498.88L482.0,498.88L482.0,499.90L482.5,499.90L482.5,498.69L483.0,498.69L483.0,498.19L483.5,498.19L483.5,499.20L484.0,499.20L484.0,498.62L484.5,498.62L484.5,499.87L485.0,499.87L485.0,498.98L485.5,498.98L485.5,499.09L486.0,499.09L486.0,498.51L486.5,498.51L486.5,500.12L487.0,500.12L487.0,499.32L487.5,499.32L487.5,497.42L488.0,497.42L488.0,498.80L488.5,498.80L488.5,498.58L489.0,498.58L489.0,499.87L489.5,499.87L489.5,498.57L490.0,498.57L490.0,497.35L490.5,497.35L490.5,499.44L491.0,499.44L491.0,499.66L491.5,499.66L491.5,499.97L492.0,499.97L492.0,498.48L492.5,498.48L492.5,499.29L493.0,499.29L493.0,498.90L493.5,498.90L493.5,499.13L494.0,499.13L494.0,499.47L494.5,499.47L494.5,498.66L495.0,498.66L495.0,499.74L495.5,499.74L495.5,497.74L496.0,497.74L496.0,497.02L496.5,497.02L496.5,496.85L497.0,496.85L497.0,497.54L497.5,497.54L497.5,497.34L498.0,497.34L498.0,498.35L498.5,498.35L498.5,496.88L499.0,496.88L499.0,499.07L499.5,499.07L499.5,498.55L500.0,498.55L500.0,497.66L500.5,497.66L500.5,497.39L501.0,497.39L501.0,499.04L501.5,499.04L501.5,499.06L502.0,499.06L502.0,498.01L502.5,498.01L502.5,499.11L503.0,499.11L503.0,499.70L503.5,499.70L503.5,498.81L504.0,498.81L504.0,498.52L504.5,498.52L504.5,498.19L505.0,498.19L505.0,499.05L505.5,499.05L505.5,499.18L506.0,499.18L506.0,498.43L506.5,498.43L506.5,498.78L507.0,498.78L507.0,499.19L507.5,499.19L507.5,499.43L508.0,499.43L508.0,498.76L508.5,498.76L508.5,499.23L509.0,499.23L509.0,499.50L509.5,499.50L509.5,498.96L510.0,498.96L510.0,498.80L510.5,498.80L510.5,499.09L511.0,499.09L511.0,498.42L511.5,498.42L511.5,499.95L512.0,499.95L512.0,499.40L512.5,499.40L512.5,498.91L513.0,498.91L513.0,498.93L513.5,498.93L513.5,498.69L514.0,498.69L514.0,499.97L514.5,499.97L514.5,498.51L515.0,498.51L515.0,499.19L515.5,499.19L515.5,498.60L516.0,498.60L516.0,500.13L516.5,500.13L516.5,498.68L517.0,498.68L517.0,499.03L517.5,499.03L517.5,499.51L518.0,499.51L518.0,499.88L518.5,499.88L518.5,499.73L519.0,499.73L519.0,499.77L519.5,499.77L519.5,499.81L520.0,499.81L520.0,500.05L520.5,500.05L520.5,498.32L521.0,498.32L521.0,499.45L521.5,499.45L521.5,500.13L522.0,500.13L522.0,499.15L522.5,499.15L522.5,499.97L523.0,499.97L523.0,499.08L523.5,499.08L523.5,499.22L524.0,499.22L524.0,498.93L524.5,498.93L524.5,499.40L525.0,499.40L525.0,498.98L525.5,498.98L525.5,499.93L526.0,499.93L526.0,499.20L526.5,499.20L526.5,498.95L527.0,498.95L527.0,499.44L527.5,499.44L527.5,498.56L528.0,498.56L528.0,498.98L528.5,498.98L528.5,499.91L529.0,499.91L529.0,498.77L529.5,498.77L529.5,499.47L530.0,499.47L530.0,499.42L530.5,499.42L530.5,500.06L531.0,500.06L531.0,499.37L531.5,499.37L531.5,499.33L532.0,499.33L532.0,499.63L532.5,499.63L532.5,499.04L533.0,499.04L533.0,499.03L533.5,499.03L533.5,499.62L534.0,499.62L534.0,498.58L534.5,498.58L534.5,499.12L535.0,499.12L535.0,499.43L535.5,499.43L535.5,500.14L536.0,500.14L536.0,499.19L536.5,499.19L536.5,500.19L537.0,500.19L537.0,499.35L537.5,499.35L537.5,498.71L538.0,498.71L538.0,500.16L538.5,500.16L538.5,499.32L539.0,499.32L539.0,500.01L539.5,500.01L539.5,499.88L540.0,499.88L540.0,500.00L540.5,500.00L540.5,498.68L541.0,498.68L541.0,499.32L541.5,499.32L541.5,498.74L542.0,498.74L542.0,499.53L542.5,499.53L542.5,499.04L543.0,499.04L543.0,499.55L543.5,499.55L543.5,499.14L544.0,499.14L544.0,498.95L544.5,498.95L544.5,498.41L545.0,498.41L545.0,499.92L545.5,499.92L545.5,499.60L546.0,499.60L546.0,499.30L546.5,499.30L546.5,498.88L547.0,498.88L547.0,499.36L547.5,499.36L547.5,499.43L548.0,499.43L548.0,498.62L548.5,498.62L548.5,499.77L549.0,499.77L549.0,498.58L549.5,498.58L549.5,499.34L550.0,499.34L550.0,499.50L550.5,499.50L550.5,496.86L551.0,496.86L551.0,498.98L551.5,498.98L551.5,499.04L552.0,499.04L552.0,498.88L552.5,498.88L552.5,500.03L553.0,500.03L553.0,499.03L553.5,499.03L553.5,499.09L554.0,499.09L554.0,500.00L554.5,500.00L554.5,500.13L555.0,500.13L555.0,497.94L555.5,497.94L555.5,498.23L556.0,498.23L556.0,498.38L556.5,498.38L556.5,497.77L557.0,497.77L557.0,498.70L557.5,498.70L557.5,498.52L558.0,498.52L558.0,498.48L558.5,498.48L558.5,497.85L559.0,497.85L559.0,497.91L559.5,497.91L559.5,498.51L560.0,498.51L560.0,498.56L560.5,498.56L560.5,498.00L561.0,498.00L561.0,498.31L561.5,498.31L561.5,498.19L562.0,498.19L562.0,498.43L562.5,498.43L562.5,498.00L563.0,498.00L563.0,498.12L563.5,498.12L563.5,499.53L564.0,499.53L564.0,499.26L564.5,499.26L564.5,498.48L565.0,498.48L565.0,498.62L565.5,498.62L565.5,499.37L566.0,499.37L566.0,499.29L566.5,499.29L566.5,499.26L567.0,499.26L567.0,498.62L567.5,498.62L567.5,499.38L568.0,499.38L568.0,499.79L568.5,499.79L568.5,499.58L569.0,499.58L569.0,498.96L569.5,498.96L569.5,498.55L570.0,498.55L570.0,499.93L570.5,499.93L570.5,499.59L571.0,499.59L571.0,499.41L571.5,499.41L571.5,499.30L572.0,499.30L572.0,498.52L572.5,498.52L572.5,498.81L573.0,498.81L573.0,499.69L573.5,499.69L573.5,499.13L574.0,499.13L574.0,499.79L574.5,499.79L574.5,499.95L575.0,499.95L575.0,497.38L575.5,497.38L575.5,499.59L576.0,499.59L576.0,499.14L576.5,499.14L576.5,499.66L577.0,499.66L577.0,499.92L577.5,499.92L577.5,499.53L578.0,499.53L578.0,498.61L578.5,498.61L578.5,499.72L579.0,499.72L579.0,498.47L579.5,498.47L579.5,498.69L580.0,498.69L580.0,498.95L580.5,498.95L580.5,498.47L581.0,498.47L581.0,499.55L581.5,499.55L581.5,499.91L582.0,499.91L582.0,499.69L582.5,499.69L582.5,499.18L583.0,499.18L583.0,497.28L583.5,497.28L583.5,499.80L584.0,499.80L584.0,498.48L584.5,498.48L584.5,499.49L585.0,499.49L585.0,498.84L585.5,498.84L585.5,499.82L586.0,499.82L586.0,500.05L586.5,500.05L586.5,498.56L587.0,498.56L587.0,499.11L587.5,499.11L587.5,499.89L588.0,499.89L588.0,498.56L588.5,498.56L588.5,499.16L589.0,499.16L589.0,499.64L589.5,499.64L589.5,499.89L590.0,499.89L590.0,499.22L590.5,499.22L590.5,499.66L591.0,499.66L591.0,499.32L591.5,499.32L591.5,498.63L592.0,498.63L592.0,498.48L592.5,498.48L592.5,499.85L593.0,499.85L593.0,499.38L593.5,499.38L593.5,499.55L594.0,499.55L594.0,498.85L594.5,498.85L594.5,499.04L595.0,499.04L595.0,498.76L595.5,498.76L595.5,498.65L596.0,498.65L596.0,499.61L596.5,499.61L596.5,498.84L597.0,498.84L597.0,499.20L597.5,499.20L597.5,499.03L598.0,499.03L598.0,499.99L598.5,499.99L598.5,499.41L599.0,499.41L599.0,499.87L599.5,499.87L599.5,499.77L600.0,499.77L600.0,499.60L600.5,499.60L600.5,499.23L601.0,499.23L601.0,499.90L601.5,499.90L601.5,498.92L602.0,498.92L602.0,498.77L602.5,498.77L602.5,498.91L603.0,498.91L603.0,499.66L603.5,499.66L603.5,498.60L604.0,498.60L604.0,499.24L604.5,499.24L604.5,498.70L605.0,498.70L605.0,498.42L605.5,498.42L605.5,499.75L606.0,499.75L606.0,499.69L606.5,499.69L606.5,499.41L607.0,499.41L607.0,499.28L607.5,499.28L607.5,498.74L608.0,498.74L608.0,498.41L608.5,498.41L608.5,499.56L609.0,499.56L609.0,500.08L609.5,500.08L609.5,498.85L610.0,498.85L610.0,496.99L610.5,496.99L610.5,499.91L611.0,499.91L611.0,498.73L611.5,498.73L611.5,499.92L612.0,499.92L612.0,498.70L612.5,498.70L612.5,499.89L613.0,499.89L613.0,498.99L613.5,498.99L613.5,499.89L614.0,499.89L614.0,499.06L614.5,499.06L614.5,497.09L615.0,497.09L615.0,496.07L615.5,496.07L615.5,497.32L616.0,497.32L616.0,498.35L616.5,498.35L616.5,497.02L617.0,497.02L617.0,497.49L617.5,497.49L617.5,498.33L618.0,498.33L618.0,497.61L618.5,497.61L618.5,496.67L619.0,496.67L619.0,499.06L619.5,499.06L619.5,498.83L620.0,498.83L620.0,498.20L620.5,498.20L620.5,499.40L621.0,499.40L621.0,498.33L621.5,498.33L621.5,498.67L622.0,498.67L622.0,498.36L622.5,498.36L622.5,499.47L623.0,499.47L623.0,499.67L623.5,499.67L623.5,498.15L624.0,498.15L624.0,498.54L624.5,498.54L624.5,499.04L625.0,499.04L625.0,498.86L625.5,498.86L625.5,498.54L626.0,498.54L626.0,498.38L626.5,498.38L626.5,499.45L627.0,499.45L627.0,499.35L627.5,499.35L627.5,499.11L628.0,499.11L628.0,498.72L628.5,498.72L628.5,499.39L629.0,499.39L629.0,499.95L629.5,499.95L629.5,498.57L630.0,498.57L630.0,498.85L630.5,498.85L630.5,499.40L631.0,499.40L631.0,499.43L631.5,499.43L631.5,499.32L632.0,499.32L632.0,498.54L632.5,498.54L632.5,498.53L633.0,498.53L633.0,499.95L633.5,499.95L633.5,499.69L634.0,499.69L634.0,498.61L634.5,498.61L634.5,499.70L635.0,499.70L635.0,499.89L635.5,499.89L635.5,498.71L636.0,498.71L636.0,499.41L636.5,499.41L636.5,498.65L637.0,498.65L637.0,498.50L637.5,498.50L637.5,497.68L638.0,497.68L638.0,498.78L638.5,498.78L638.5,499.67L639.0,499.67L639.0,500.00L639.5,500.00L639.5,499.97L640.0,499.97L640.0,500.05L640.5,500.05L640.5,498.70L641.0,498.70L641.0,499.01L641.5,499.01L641.5,499.62L642.0,499.62L642.0,498.62L642.5,498.62L642.5,499.73L643.0,499.73L643.0,499.70L643.5,499.70L643.5,499.49L644.0,499.49L644.0,499.39L644.5,499.39L644.5,498.60L645.0,498.60L645.0,499.62L645.5,499.62L645.5,498.75L646.0,498.75L646.0,499.91L646.5,499.91L646.5,497.94L647.0,497.94L647.0,499.84L647.5,499.84L647.5,499.40L648.0,499.40L648.0,499.64L648.5,499.64L648.5,498.66L649.0,498.66L649.0,499.37L649.5,499.37L649.5,499.85L650.0,499.85L650.0,498.42L650.5,498.42L650.5,498.67L651.0,498.67L651.0,499.97L651.5,499.97L651.5,498.46L652.0,498.46L652.0,499.87L652.5,499.87L652.5,499.11L653.0,499.11L653.0,498.68L653.5,498.68L653.5,499.11L654.0,499.11L654.0,499.50L654.5,499.50L654.5,498.99L655.0,498.99L655.0,500.01L655.5,500.01L655.5,498.48L656.0,498.48L656.0,499.05L656.5,499.05L656.5,499.44L657.0,499.44L657.0,497.67L657.5,497.67L657.5,497.81L658.0,497.81L658.0,500.18L658.5,500.18L658.5,498.66L659.0,498.66L659.0,498.89L659.5,498.89L659.5,499.30L660.0,499.30L660.0,499.42L660.5,499.42L660.5,500.12L661.0,500.12L661.0,498.46L661.5,498.46L661.5,499.79L662.0,499.79L662.0,499.79L662.5,499.79L662.5,499.54L663.0,499.54L663.0,498.91L663.5,498.91L663.5,499.97L664.0,499.97L664.0,499.63L664.5,499.63L664.5,499.77L665.0,499.77L665.0,499.32L665.5,499.32L665.5,499.03L666.0,499.03L666.0,499.13L666.5,499.13L666.5,499.01L667.0,499.01L667.0,500.18L667.5,500.18L667.5,499.06L668.0,499.06L668.0,498.82L668.5,498.82L668.5,496.84L669.0,496.84L669.0,499.22L669.5,499.22L669.5,499.42L670.0,499.42L670.0,498.70L670.5,498.70L670.5,498.94L671.0,498.94L671.0,499.71L671.5,499.71L671.5,500.09L672.0,500.09L672.0,500.06L672.5,500.06L672.5,498.54L673.0,498.54L673.0,499.44L673.5,499.44L673.5,499.04L674.0,499.04L674.0,499.17L674.5,499.17L674.5,495.48L675.0,495.48L675.0,497.55L675.5,497.55L675.5,496.53L676.0,496.53L676.0,497.49L676.5,497.49L676.5,497.82L677.0,497.82L677.0,496.94L677.5,496.94L677.5,498.00L678.0,498.00L678.0,499.19L678.5,499.19L678.5,497.50L679.0,497.50L679.0,498.88L679.5,498.88L679.5,498.13L680.0,498.13L680.0,498.52L680.5,498.52L680.5,498.10L681.0,498.10L681.0,498.98L681.5,498.98L681.5,499.00L682.0,499.00L682.0,497.96L682.5,497.96L682.5,499.75L683.0,499.75L683.0,499.46L683.5,499.46L683.5,498.30L684.0,498.30L684.0,498.29L684.5,498.29L684.5,499.11L685.0,499.11L685.0,499.38L685.5,499.38L685.5,499.50L686.0,499.50L686.0,499.62L686.5,499.62L686.5,499.79L687.0,499.79L687.0,499.22L687.5,499.22L687.5,499.34L688.0,499.34L688.0,497.42L688.5,497.42L688.5,499.58L689.0,499.58L689.0,499.05L689.5,499.05L689.5,498.81L690.0,498.81L690.0,497.86L690.5,497.86L690.5,498.51L691.0,498.51L691.0,499.40L691.5,499.40L691.5,500.09L692.0,500.09L692.0,498.67L692.5,498.67L692.5,499.73L693.0,499.73L693.0,497.02L693.5,497.02L693.5,498.84L694.0,498.84L694.0,499.30L694.5,499.30L694.5,499.02L695.0,499.02L695.0,499.23L695.5,499.23L695.5,500.03L696.0,500.03L696.0,499.72L696.5,499.72L696.5,499.56L697.0,499.56L697.0,499.96L697.5,499.96L697.5,499.42L698.0,499.42L698.0,500.05L698.5,500.05L698.5,499.53L699.0,499.53L699.0,498.85L699.5,498.85L699.5,499.18L700.0,499.18L700.0,498.77L700.5,498.77L700.5,499.56L701.0,499.56L701.0,500.19L701.5,500.19L701.5,499.43L702.0,499.43L702.0,499.95L702.5,499.95L702.5,498.88L703.0,498.88L703.0,499.88L703.5,499.88L703.5,499.00L704.0,499.00L704.0,500.00L704.5,500.00L704.5,499.63L705.0,499.63L705.0,499.22L705.5,499.22L705.5,499.99L706.0,499.99L706.0,499.99L706.5,499.99L706.5,499.80L707.0,499.80L707.0,498.73L707.5,498.73L707.5,500.19L708.0,500.19L708.0,498.44L708.5,498.44L708.5,498.29L709.0,498.29L709.0,498.67L709.5,498.67L709.5,498.58L710.0,498.58L710.0,499.63L710.5,499.63L710.5,499.01L711.0,499.01L711.0,499.69L711.5,499.69L711.5,500.16L712.0,500.16L712.0,498.82L712.5,498.82L712.5,499.64L713.0,499.64L713.0,499.31L713.5,499.31L713.5,499.17L714.0,499.17L714.0,498.44L714.5,498.44L714.5,498.97L715.0,498.97L715.0,498.62L715.5,498.62L715.5,498.64L716.0,498.64L716.0,498.72L716.5,498.72L716.5,498.67L717.0,498.67L717.0,499.30L717.5,499.30L717.5,499.04L718.0,499.04L718.0,500.05L718.5,500.05L718.5,498.79L719.0,498.79L719.0,499.99L719.5,499.99L719.5,498.89L720.0,498.89L720.0,498.88L720.5,498.88L720.5,498.48L721.0,498.48L721.0,499.13L721.5,499.13L721.5,497.52L722.0,497.52L722.0,499.58L722.5,499.58L722.5,499.39L723.0,499.39L723.0,500.17L723.5,500.17L723.5,499.69L724.0,499.69L724.0,498.97L724.5,498.97L724.5,500.15L725.0,500.15L725.0,499.09L725.5,499.09L725.5,498.66L726.0,498.66L726.0,498.41L726.5,498.41L726.5,500.07L727.0,500.07L727.0,499.50L727.5,499.50L727.5,498.83L728.0,498.83L728.0,498.61L728.5,498.61L728.5,499.81L729.0,499.81L729.0,498.49L729.5,498.49L729.5,498.98L730.0,498.98L730.0,499.39L730.5,499.39L730.5,498.53L731.0,498.53L731.0,499.94L731.5,499.94L731.5,499.47L732.0,499.47L732.0,498.82L732.5,498.82L732.5,499.74L733.0,499.74L733.0,499.68L733.5,499.68L733.5,499.35L734.0,499.35L734.0,496.81L734.5,496.81L734.5,496.89L735.0,496.89L735.0,496.87L735.5,496.87L735.5,497.90L736.0,497.90L736.0,496.63L736.5,496.63L736.5,497.85L737.0,497.85L737.0,498.87L737.5,498.87L737.5,498.58L738.0,498.58L738.0,498.55L738.5,498.55L738.5,497.30L739.0,497.30L739.0,499.25L739.5,499.25L739.5,498.18L740.0,498.18L740.0,499.19L740.5,499.19L740.5,497.73L741.0,497.73L741.0,499.12L741.5,499.12L741.5,499.48L742.0,499.48L742.0,499.18L742.5,499.18L742.5,498.49L743.0,498.49L743.0,497.92L743.5,497.92L743.5,498.14L744.0,498.14L744.0,498.67L744.5,498.67L744.5,499.63L745.0,499.63L745.0,499.74L745.5,499.74L745.5,499.65L746.0,499.65L746.0,498.48L746.5,498.48L746.5,499.06L747.0,499.06L747.0,498.93L747.5,498.93L747.5,499.57L748.0,499.57L748.0,499.03L748.5,499.03L748.5,499.44L749.0,499.44L749.0,498.74L749.5,498.74L749.5,499.68L750.0,499.68L750.0,499.60L750.5,499.60L750.5,498.53L751.0,498.53L751.0,499.08L751.5,499.08L751.5,499.29L752.0,499.29L752.0,498.37L752.5,498.37L752.5,499.23L753.0,499.23L753.0,499.91L753.5,499.91L753.5,496.86L754.0,496.86L754.0,496.50L754.5,496.50L754.5,497.75L755.0,497.75L755.0,496.61L755.5,496.61L755.5,498.64L756.0,498.64L756.0,497.02L756.5,497.02L756.5,497.05L757.0,497.05L757.0,498.11L757.5,498.11L757.5,498.99L758.0,498.99L758.0,498.66L758.5,498.66L758.5,499.14L759.0,499.14L759.0,497.91L759.5,497.91L759.5,497.86L760.0,497.86L760.0,498.39L760.5,498.39L760.5,499.41L761.0,499.41L761.0,498.75L761.5,498.75L761.5,499.42L762.0,499.42L762.0,498.61L762.5,498.61L762.5,499.04L763.0,499.04L763.0,499.01L763.5,499.01L763.5,499.49L764.0,499.49L764.0,499.19L764.5,499.19L764.5,499.13L765.0,499.13L765.0,498.74L765.5,498.74L765.5,498.92L766.0,498.92L766.0,499.84L766.5,499.84L766.5,499.22L767.0,499.22L767.0,499.20L767.5,499.20L767.5,498.50L768.0,498.50L768.0,499.55L768.5,499.55L768.5,499.95L769.0,499.95L769.0,499.47L769.5,499.47L769.5,500.06L770.0,500.06L770.0,499.84L770.5,499.84L770.5,499.61L771.0,499.61L771.0,498.93L771.5,498.93L771.5,499.91L772.0,499.91L772.0,500.05L772.5,500.05L772.5,498.58L773.0,498.58L773.0,499.81L773.5,499.81L773.5,499.15L774.0,499.15L774.0,498.86L774.5,498.86L774.5,499.63L775.0,499.63L775.0,498.50L775.5,498.50L775.5,498.48L776.0,498.48L776.0,498.93L776.5,498.93L776.5,499.45L777.0,499.45L777.0,499.41L777.5,499.41L777.5,500.04L778.0,500.04L778.0,499.91L778.5,499.91L778.5,499.84L779.0,499.84L779.0,499.10L779.5,499.10L779.5,499.08L780.0,499.08L780.0,498.80L780.5,498.80L780.5,498.57L781.0,498.57L781.0,499.71L781.5,499.71L781.5,499.62L782.0,499.62L782.0,499.89L782.5,499.89L782.5,500.06L783.0,500.06L783.0,500.09L783.5,500.09L783.5,498.92L784.0,498.92L784.0,499.75L784.5,499.75L784.5,500.07L785.0,500.07L785.0,499.27L785.5,499.27L785.5,499.48L786.0,499.48L786.0,498.56L786.5,498.56L786.5,498.89L787.0,498.89L787.0,499.92L787.5,499.92L787.5,500.06L788.0,500.06L788.0,499.48L788.5,499.48L788.5,499.02L789.0,499.02L789.0,499.58L789.5,499.58L789.5,499.00L790.0,499.00L790.0,498.85L790.5,498.85L790.5,498.72L791.0,498.72L791.0,498.94L791.5,498.94L791.5,499.41L792.0,499.41L792.0,499.39L792.5,499.39L792.5,499.47L793.0,499.47L793.0,498.46L793.5,498.46L793.5,498.58L794.0,498.58L794.0,498.64L794.5,498.64L794.5,499.04L795.0,499.04L795.0,499.59L795.5,499.59L795.5,498.71L796.0,498.71L796.0,499.00L796.5,499.00L796.5,499.97L797.0,499.97L797.0,498.67L797.5,498.67L797.5,499.98L798.0,499.98L798.0,499.29L798.5,499.29L798.5,498.61L799.0,498.61L799.0,498.70L799.5,498.70L799.5,499.31L800.0,499.31L800.0,498.76L800.5,498.76L800.5,498.77L801.0,498.77L801.0,498.83L801.5,498.83L801.5,499.30L802.0,499.30L802.0,498.43L802.5,498.43L802.5,499.28L803.0,499.28L803.0,499.43L803.5,499.43L803.5,498.81L804.0,498.81L804.0,498.68L804.5,498.68L804.5,498.46L805.0,498.46L805.0,499.33L805.5,499.33L805.5,500.00L806.0,500.00L806.0,499.44L806.5,499.44L806.5,499.47L807.0,499.47L807.0,499.68L807.5,499.68L807.5,498.84L808.0,498.84L808.0,500.17L808.5,500.17L808.5,499.51L809.0,499.51L809.0,499.87L809.5,499.87L809.5,499.86L810.0,499.86L810.0,498.15L810.5,498.15L810.5,499.14L811.0,499.14L811.0,498.56L811.5,498.56L811.5,499.72L812.0,499.72L812.0,498.67L812.5,498.67L812.5,498.65L813.0,498.65L813.0,498.80L813.5,498.80L813.5,500.16L814.0,500.16L814.0,499.82L814.5,499.82L814.5,499.30L815.0,499.30L815.0,500.03L815.5,500.03L815.5,499.55L816.0,499.55L816.0,499.53L816.5,499.53L816.5,499.82L817.0,499.82L817.0,499.69L817.5,499.69L817.5,498.69L818.0,498.69L818.0,499.61L818.5,499.61L818.5,498.64L819.0,498.64L819.0,500.09L819.5,500.09L819.5,499.74L820.0,499.74L820.0,499.84L820.5,499.84L820.5,499.18L821.0,499.18L821.0,499.81L821.5,499.81L821.5,498.94L822.0,498.94L822.0,499.36L822.5,499.36L822.5,498.61L823.0,498.61L823.0,499.82L823.5,499.82L823.5,499.91L824.0,499.91L824.0,498.76L824.5,498.76L824.5,498.83L825.0,498.83L825.0,500.03L825.5,500.03L825.5,499.68L826.0,499.68L826.0,499.81L826.5,499.81L826.5,499.63L827.0,499.63L827.0,499.89L827.5,499.89L827.5,498.56L828.0,498.56L828.0,499.91L828.5,499.91L828.5,499.47L829.0,499.47L829.0,498.59L829.5,498.59L829.5,498.43L830.0,498.43L830.0,499.86L830.5,499.86L830.5,499.49L831.0,499.49L831.0,499.00L831.5,499.00L831.5,499.04L832.0,499.04L832.0,499.51L832.5,499.51L832.5,498.56L833.0,498.56L833.0,499.66L833.5,499.66L833.5,499.59L834.0,499.59L834.0,498.62L834.5,498.62L834.5,498.47L835.0,498.47L835.0,498.73L835.5,498.73L835.5,500.12L836.0,500.12L836.0,498.80L836.5,498.80L836.5,499.50L837.0,499.50L837.0,499.11L837.5,499.11L837.5,500.12L838.0,500.12L838.0,500.18L838.5,500.18L838.5,499.90L839.0,499.90L839.0,498.59L839.5,498.59L839.5,500.10L840.0,500.10L840.0,499.86L840.5,499.86L840.5,499.03L841.0,499.03L841.0,499.39L841.5,499.39L841.5,499.32L842.0,499.32L842.0,500.07L842.5,500.07L842.5,499.60L843.0,499.60L843.0,499.52L843.5,499.52L843.5,500.12L844.0,500.12L844.0,499.59L844.5,499.59L844.5,499.08L845.0,499.08L845.0,499.62L845.5,499.62L845.5,499.30L846.0,499.30L846.0,500.16L846.5,500.16L846.5,499.90L847.0,499.90L847.0,499.40L847.5,499.40L847.5,499.75L848.0,499.75L848.0,499.71L848.5,499.71L848.5,498.46L849.0,498.46L849.0,498.65L849.5,498.65L849.5,500.00L850.0,500.00L850.0,499.46L850.5,499.46L850.5,498.48L851.0,498.48L851.0,499.75L851.5,499.75L851.5,498.91L852.0,498.91L852.0,498.92L852.5,498.92L852.5,499.16L853.0,499.16L853.0,496.73L853.5,496.73L853.5,496.49L854.0,496.49L854.0,498.15L854.5,498.15L854.5,497.25L855.0,497.25L855.0,497.40L855.5,497.40L855.5,498.29L856.0,498.29L856.0,497.85L856.5,497.85L856.5,497.38L857.0,497.38L857.0,499.25L857.5,499.25L857.5,499.30L858.0,499.30L858.0,498.51L858.5,498.51L858.5,498.12L859.0,498.12L859.0,498.02L859.5,498.02L859.5,498.56L860.0,498.56L860.0,499.41L860.5,499.41L860.5,499.27L861.0,499.27L861.0,499.26L861.5,499.26L861.5,498.67L862.0,498.67L862.0,498.64L862.5,498.64L862.5,499.41L863.0,499.41L863.0,499.06L863.5,499.06L863.5,498.71L864.0,498.71L864.0,499.14L864.5,499.14L864.5,499.01L865.0,499.01L865.0,498.95L865.5,498.95L865.5,500.14L866.0,500.14L866.0,499.65L866.5,499.65L866.5,499.11L867.0,499.11L867.0,499.74L867.5,499.74L867.5,499.11L868.0,499.11L868.0,499.03L868.5,499.03L868.5,499.97L869.0,499.97L869.0,499.34L869.5,499.34L869.5,500.02L870.0,500.02L870.0,499.01L870.5,499.01L870.5,499.14L871.0,499.14L871.0,499.93L871.5,499.93L871.5,499.44L872.0,499.44L872.0,499.43L872.5,499.43L872.5,499.92L873.0,499.92L873.0,499.91L873.5,499.91L873.5,499.61L874.0,499.61L874.0,499.30L874.5,499.30L874.5,500.02L875.0,500.02L875.0,499.88L875.5,499.88L875.5,499.98L876.0,499.98L876.0,499.67L876.5,499.67L876.5,499.50L877.0,499.50L877.0,498.52L877.5,498.52L877.5,499.88L878.0,499.88L878.0,498.78L878.5,498.78L878.5,498.57L879.0,498.57L879.0,500.15L879.5,500.15L879.5,499.05L880.0,499.05L880.0,498.53L880.5,498.53L880.5,497.54L881.0,497.54L881.0,498.65L881.5,498.65L881.5,498.51L882.0,498.51L882.0,499.40L882.5,499.40L882.5,498.47L883.0,498.47L883.0,500.36L883.5,500.36L883.5,500.28L884.0,500.28L884.0,499.85L884.5,499.85L884.5,500.24L885.0,500.24L885.0,499.63L885.5,499.63L885.5,499.68L886.0,499.68L886.0,500.30L886.5,500.30L886.5,500.31L887.0,500.31L887.0,500.79L887.5,500.79L887.5,500.00L888.0,500.00L888.0,500.17L888.5,500.17L888.5,500.42L889.0,500.42L889.0,500.01L889.5,500.01L889.5,499.94L890.0,499.94L890.0,500.22L890.5,500.22L890.5,500.44L891.0,500.44L891.0,500.27L891.5,500.27L891.6,516Z" fill="#e65e2a"/>
<rect x="76.40" y="355.6" width="1" height="144.4" fill="#e65e2a"/>
<rect x="136.30" y="360.1" width="1" height="139.9" fill="#e65e2a"/>
<rect x="196.20" y="367.1" width="1" height="132.9" fill="#e65e2a"/>
<rect x="255.70" y="369.2" width="1" height="130.8" fill="#e65e2a"/>
<rect x="258.70" y="485.0" width="1" height="15.0" fill="#e65e2a"/>
<rect x="275.40" y="468.1" width="1" height="31.9" fill="#e65e2a"/>
<rect x="286.00" y="486.2" width="1" height="13.8" fill="#e65e2a"/>
<rect x="295.90" y="481.7" width="1" height="18.3" fill="#e65e2a"/>
<rect x="305.90" y="482.3" width="1" height="17.7" fill="#e65e2a"/>
<rect x="315.60" y="375.3" width="1" height="124.7" fill="#e65e2a"/>
<rect x="335.30" y="361.0" width="1" height="139.0" fill="#e65e2a"/>
<rect x="345.80" y="482.0" width="1" height="18.0" fill="#e65e2a"/>
<rect x="355.50" y="476.5" width="1" height="23.5" fill="#e65e2a"/>
<rect x="365.50" y="484.0" width="1" height="16.0" fill="#e65e2a"/>
<rect x="375.50" y="482.0" width="1" height="18.0" fill="#e65e2a"/>
<rect x="394.50" y="491.0" width="1" height="9.0" fill="#e65e2a"/>
<rect x="435.10" y="338.4" width="1" height="161.6" fill="#e65e2a"/>
<rect x="494.60" y="347.4" width="1" height="152.6" fill="#e65e2a"/>
<rect x="554.20" y="355.0" width="1" height="145.0" fill="#e65e2a"/>
<rect x="613.80" y="352.6" width="1" height="147.4" fill="#e65e2a"/>
<rect x="673.60" y="361.6" width="1" height="138.4" fill="#e65e2a"/>
<rect x="692.10" y="484.7" width="1" height="15.3" fill="#e65e2a"/>
<rect x="693.60" y="471.1" width="1" height="28.9" fill="#e65e2a"/>
<rect x="703.60" y="480.2" width="1" height="19.8" fill="#e65e2a"/>
<rect x="713.60" y="482.6" width="1" height="17.4" fill="#e65e2a"/>
<rect x="723.50" y="477.2" width="1" height="22.8" fill="#e65e2a"/>
<rect x="733.50" y="363.2" width="1" height="136.8" fill="#e65e2a"/>
<rect x="752.90" y="353.5" width="1" height="146.5" fill="#e65e2a"/>
<rect x="762.90" y="481.7" width="1" height="18.3" fill="#e65e2a"/>
<rect x="772.80" y="482.6" width="1" height="17.4" fill="#e65e2a"/>
<rect x="783.10" y="481.1" width="1" height="18.9" fill="#e65e2a"/>
<rect x="793.10" y="481.7" width="1" height="18.3" fill="#e65e2a"/>
<rect x="798.20" y="491.7" width="1" height="8.3" fill="#e65e2a"/>
<rect x="812.10" y="491.1" width="1" height="8.9" fill="#e65e2a"/>
<rect x="852.40" y="321.7" width="1" height="178.3" fill="#e65e2a"/>
<rect x="55" y="516" width="836.6" height="9" fill="#c3c3c3"/>
<line x1="42" y1="516.5" x2="896.7" y2="516.5" stroke="#c6c6c6" stroke-width="1"/>
<text x="39.3" y="290.9" text-anchor="end" font-family="Liberation Sans" font-size="12.5" letter-spacing="-0.45" fill="#555">30</text>
<text x="39.3" y="329.2" text-anchor="end" font-family="Liberation Sans" font-size="12.5" letter-spacing="-0.45" fill="#555">25</text>
<text x="39.3" y="367.6" text-anchor="end" font-family="Liberation Sans" font-size="12.5" letter-spacing="-0.45" fill="#555">20</text>
<text x="39.3" y="405.9" text-anchor="end" font-family="Liberation Sans" font-size="12.5" letter-spacing="-0.45" fill="#555">15</text>
<text x="39.3" y="444.2" text-anchor="end" font-family="Liberation Sans" font-size="12.5" letter-spacing="-0.45" fill="#555">10</text>
<text x="39.3" y="482.6" text-anchor="end" font-family="Liberation Sans" font-size="12.5" letter-spacing="-0.45" fill="#555">5</text>
<text x="39.3" y="520.9" text-anchor="end" font-family="Liberation Sans" font-size="12.5" letter-spacing="-0.45" fill="#555">0</text>
</svg>
    </div>
    <div class="abs" style="left:-2px;top:-98px;width:992px;height:800px;">
<div class="xl" style="left:61.3px">4/10/2022 13:25</div>
<div class="xl" style="left:78.3px">4/10/2022 20:15</div>
<div class="xl" style="left:95.3px">5/10/2022 03:05</div>
<div class="xl" style="left:112.3px">5/10/2022 09:55</div>
<div class="xl" style="left:129.3px">5/10/2022 16:45</div>
<div class="xl" style="left:146.3px">5/10/2022 23:35</div>
<div class="xl" style="left:163.3px">6/10/2022 06:25</div>
<div class="xl" style="left:180.3px">6/10/2022 13:15</div>
<div class="xl" style="left:197.3px">6/10/2022 20:05</div>
<div class="xl" style="left:214.3px">7/10/2022 02:55</div>
<div class="xl" style="left:231.3px">7/10/2022 09:45</div>
<div class="xl" style="left:248.3px">7/10/2022 16:35</div>
<div class="xl" style="left:265.3px">7/10/2022 23:25</div>
<div class="xl" style="left:282.2px">8/10/2022 06:15</div>
<div class="xl" style="left:299.2px">8/10/2022 13:05</div>
<div class="xl" style="left:316.2px">8/10/2022 19:55</div>
<div class="xl" style="left:333.2px">9/10/2022 02:45</div>
<div class="xl" style="left:350.2px">9/10/2022 09:35</div>
<div class="xl" style="left:367.2px">9/10/2022 16:25</div>
<div class="xl" style="left:384.2px">9/10/2022 23:15</div>
<div class="xl" style="left:401.2px">10/10/2022 06:05</div>
<div class="xl" style="left:418.2px">10/10/2022 12:55</div>
<div class="xl" style="left:435.2px">10/10/2022 19:45</div>
<div class="xl" style="left:452.2px">11/10/2022 02:35</div>
<div class="xl" style="left:469.2px">11/10/2022 09:25</div>
<div class="xl" style="left:486.2px">11/10/2022 16:15</div>
<div class="xl" style="left:503.2px">11/10/2022 23:05</div>
<div class="xl" style="left:520.2px">12/10/2022 05:55</div>
<div class="xl" style="left:537.2px">12/10/2022 12:45</div>
<div class="xl" style="left:554.2px">12/10/2022 19:35</div>
<div class="xl" style="left:571.2px">13/10/2022 02:25</div>
<div class="xl" style="left:588.2px">13/10/2022 09:15</div>
<div class="xl" style="left:605.2px">13/10/2022 16:05</div>
<div class="xl" style="left:622.2px">13/10/2022 22:55</div>
<div class="xl" style="left:639.2px">14/10/2022 05:45</div>
<div class="xl" style="left:656.2px">14/10/2022 12:35</div>
<div class="xl" style="left:673.2px">14/10/2022 19:25</div>
<div class="xl" style="left:690.2px">15/10/2022 02:15</div>
<div class="xl" style="left:707.1px">15/10/2022 09:15</div>
<div class="xl" style="left:724.1px">15/10/2022 16:05</div>
<div class="xl" style="left:741.1px">15/10/2022 22:55</div>
<div class="xl" style="left:758.1px">16/10/2022 05:45</div>
<div class="xl" style="left:775.1px">16/10/2022 12:35</div>
<div class="xl" style="left:792.1px">16/10/2022 19:25</div>
<div class="xl" style="left:809.1px">17/10/2022 02:15</div>
<div class="xl" style="left:826.1px">17/10/2022 09:05</div>
<div class="xl" style="left:843.1px">17/10/2022 15:55</div>
<div class="xl" style="left:860.1px">17/10/2022 22:45</div>
<div class="xl" style="left:877.1px">18/10/2022 05:35</div>
<div class="xl" style="left:897.2px">18/10/2022 13:25</div>
    </div>
    <div class="legend"><div class="sw"></div><div class="lt">CPU %</div></div>
    <div class="h1" style="top:622.5px">Sar-like output last 180 min</div>
    <div class="p" style="top:681px">This is a sar-like output of CPU usage. It will only display "%nice" and "%iowait" on Unix.</div>
    <div class="p" style="top:715px">antar</div>
    <table>
      <tr><th style="width:170px">Date time</th><th style="width:135px">% user</th><th style="width:124px">%nice</th><th style="width:163px">%system</th><th style="width:147px">%iowait</th><th>%idle</th></tr>
      <tr><td>10:35:22</td><td>1.62</td><td>0.0</td><td>0.35</td><td>0.21</td><td>96.77</td></tr>
      <tr class="alt"><td>10:45:22</td><td>1.62</td><td>0.0</td><td>0.32</td><td>0.19</td><td>96.88</td></tr>
      <tr><td>10:55:22</td><td>1.56</td><td>0.0</td><td>0.32</td><td>0.22</td><td>96.86</td></tr>
    </table>
  </div>
  <!-- scrollbar -->
  <div class="sb">
    <svg class="abs" style="left:0;top:0" width="14" height="841" viewBox="0 0 14 841">
      <path d="M3.5,7 L7,3.5 L10.5,7" fill="none" stroke="#858585" stroke-width="1.05"/>
      <rect x="0" y="10" width="14" height="285" fill="#dadada"/>
      <rect x="0.5" y="295.5" width="13" height="535" fill="#fafafa" stroke="#d4d4d4" stroke-width="1"/>
      <path d="M3.5,834 L7,837.5 L10.5,834" fill="none" stroke="#a0a0a0" stroke-width="1.2"/>
    </svg>
  </div>
</div>
</body></html>
